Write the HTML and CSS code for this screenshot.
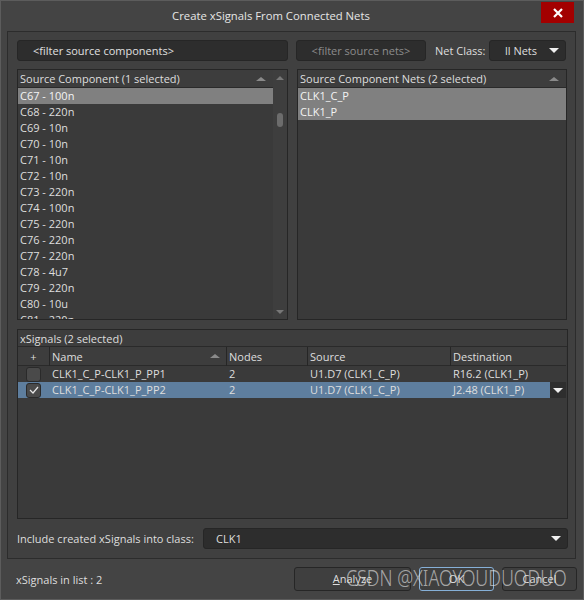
FILE: index.html
```html
<!DOCTYPE html>
<html>
<head>
<meta charset="utf-8">
<link rel="stylesheet" href="styles.css">
</head>
<body>
<div class="window">
  <div class="titlebar">
    <div class="title">Create xSignals From Connected Nets</div>
    <div class="close"><svg width="10" height="10" viewBox="0 0 10 10"><path d="M1 1L9 9M9 1L1 9" stroke="#fff" stroke-width="2.2"/></svg></div>
  </div>
  <div class="panel">
    <div class="filters">
      <div class="input comp">&lt;filter source components&gt;</div>
      <div class="input nets">&lt;filter source nets&gt;</div>
      <div class="label">Net Class:</div>
      <div class="dropdown netclass"><span>ll Nets</span><span class="tri"></span></div>
    </div>
    <div class="lists">
      <div class="list left">
        <div class="list-main">
          <div class="list-head"><span>Source Component (1 selected)</span><span class="up"></span></div>
          <div class="rows">
            <div class="row sel">C67 - 100n</div>
            <div class="row">C68 - 220n</div>
            <div class="row">C69 - 10n</div>
            <div class="row">C70 - 10n</div>
            <div class="row">C71 - 10n</div>
            <div class="row">C72 - 10n</div>
            <div class="row">C73 - 220n</div>
            <div class="row">C74 - 100n</div>
            <div class="row">C75 - 220n</div>
            <div class="row">C76 - 220n</div>
            <div class="row">C77 - 220n</div>
            <div class="row">C78 - 4u7</div>
            <div class="row">C79 - 220n</div>
            <div class="row">C80 - 10u</div>
            <div class="row">C81 - 220n</div>
          </div>
        </div>
        <div class="scrollbar">
          <span class="sb-up"></span>
          <span class="thumb"></span>
          <span class="sb-down"></span>
        </div>
      </div>
      <div class="list right">
        <div class="list-head"><span>Source Component Nets (2 selected)</span><span class="up"></span></div>
        <div class="rows">
          <div class="row sel">CLK1_C_P</div>
          <div class="row sel">CLK1_P</div>
        </div>
      </div>
    </div>
    <div class="xsig">
      <div class="xsig-title">xSignals (2 selected)</div>
      <div class="grid ghead">
        <div class="c c0 plus">+</div>
        <div class="c c1">Name<span class="up sort"></span></div>
        <div class="c c2">Nodes</div>
        <div class="c c3">Source</div>
        <div class="c c4">Destination</div>
      </div>
      <div class="grid grow">
        <div class="c c0"><span class="cb"></span></div>
        <div class="c c1">CLK1_C_P-CLK1_P_PP1</div>
        <div class="c c2">2</div>
        <div class="c c3">U1.D7 (CLK1_C_P)</div>
        <div class="c c4">R16.2 (CLK1_P)</div>
      </div>
      <div class="grid grow gsel">
        <div class="c c0"><span class="cb"><svg width="10" height="8" viewBox="0 0 10 8"><path d="M1 4L4 7L9 1" stroke="#e8e8e8" stroke-width="1.2" fill="none"/></svg></span></div>
        <div class="c c1">CLK1_C_P-CLK1_P_PP2</div>
        <div class="c c2">2</div>
        <div class="c c3">U1.D7 (CLK1_C_P)</div>
        <div class="c c4 dd">J2.48 (CLK1_P)<span class="ddbtn"><span class="tri"></span></span></div>
      </div>
    </div>
    <div class="classrow">
      <div class="label">Include created xSignals into class:</div>
      <div class="dropdown classdd"><span>CLK1</span><span class="tri"></span></div>
    </div>
  </div>
  <div class="bottom">
    <div class="count">xSignals in list : 2</div>
    <div class="buttons">
      <div class="btn analyze"><u>A</u>nalyze</div>
      <div class="btn ok">OK</div>
      <div class="btn cancel">Cancel</div>
    </div>
    <div class="watermark">CSDN @XIAOYOUDUODUO</div>
  </div>
</div>
</body>
</html>
```

FILE: styles.css
```css
* { box-sizing: border-box; }
html, body { margin: 0; padding: 0; background: #444; }
body {
  font-family: "Open Sans", "Noto Sans", sans-serif;
  font-size: 11px;
  color: #dedede;
}
.window {
  width: 584px;
  height: 600px;
  background: #444444;
  border: 1px solid #5c5c5c;
  display: flex;
  flex-direction: column;
  position: relative;
}
.titlebar {
  height: 30px;
  display: flex;
  align-items: flex-start;
  flex-shrink: 0;
}
.title {
  flex: 1;
  text-align: center;
  line-height: 30px;
  font-size: 11.3px;
  color: #e6e6e6;
}
.close {
  width: 33px;
  height: 21px;
  margin-top: 1px;
  margin-right: 9px;
  background: #a30000;
  display: flex;
  align-items: center;
  justify-content: center;
}
.panel {
  margin: 0 7px 0 6px;
  height: 528px;
  border: 1px solid #2c2c2c;
  background: #404040;
  padding: 8px 7px 0 9px;
  display: flex;
  flex-direction: column;
}
.filters {
  display: flex;
  align-items: center;
  height: 21px;
}
.input {
  height: 21px;
  background: #2d2d2d;
  border: 1px solid #262626;
  border-radius: 3px;
  line-height: 19px;
}
.input.comp { width: 271px; padding-left: 15px; color: #e0e0e0; }
.input.nets { width: 130px; margin-left: 8px; text-align: center; color: #8c8c8c; }
.filters .label { margin-left: 9px; width: 54px; }
.dropdown {
  height: 21px;
  background: #2d2d2d;
  border: 1px solid #262626;
  border-radius: 3px;
  display: flex;
  align-items: center;
  justify-content: space-between;
}
.netclass { width: 77px; padding: 0 6px 0 15px; }
.tri {
  width: 0; height: 0;
  border-left: 5px solid transparent;
  border-right: 5px solid transparent;
  border-top: 5px solid #f0f0f0;
}
.lists {
  display: flex;
  margin-top: 8px;
  height: 251px;
  gap: 9px;
}
.list {
  border: 1px solid #262626;
  background: #3a3a3a;
  overflow: hidden;
}
.list.left { width: 271px; display: flex; }
.list.right { width: 270px; }
.list-main { flex: 1; min-width: 0; }
.list-head {
  height: 18px;
  background: #3d3d3d;
  border-bottom: 1px solid #2a2a2a;
  display: flex;
  align-items: center;
  justify-content: space-between;
  padding: 0 7px 0 2px;
}
.up {
  width: 0; height: 0;
  border-left: 5px solid transparent;
  border-right: 5px solid transparent;
  border-bottom: 4px solid #8a8a8a;
}
.row {
  height: 16px;
  line-height: 16px;
  padding-left: 2px;
  white-space: nowrap;
}
.row.sel { background: #808080; color: #f4f4f4; }
.scrollbar {
  width: 14px;
  background: #3e3e3e;
  display: flex;
  flex-direction: column;
  align-items: center;
  position: relative;
}
.sb-up {
  margin-top: 6px;
  width: 0; height: 0;
  border-left: 4px solid transparent;
  border-right: 4px solid transparent;
  border-bottom: 4px solid #777;
}
.thumb {
  margin-top: 33px;
  width: 6px;
  height: 14px;
  border-radius: 3px;
  background: #6c6c6c;
}
.sb-down {
  margin-top: auto;
  margin-bottom: 5px;
  width: 0; height: 0;
  border-left: 4px solid transparent;
  border-right: 4px solid transparent;
  border-top: 4px solid #777;
}
.xsig {
  margin-top: 9px;
  height: 190px;
  border: 1px solid #262626;
  background: #3a3a3a;
}
.xsig-title {
  height: 17px;
  line-height: 17px;
  padding-left: 2px;
  background: #3d3d3d;
  border-bottom: 1px solid #2a2a2a;
}
.grid {
  display: grid;
  grid-template-columns: 31px 177px 81px 143px 116px;
  height: 16px;
  align-items: center;
}
.ghead {
  height: 19px;
  background: #3d3d3d;
  border-bottom: 1px solid #2a2a2a;
  width: 548px;
}
.ghead .c {
  height: 19px;
  line-height: 19px;
  padding-left: 2px;
  border-left: 1px solid #262626;
  position: relative;
}
.ghead .c0 { border-left: none; text-align: center; padding-left: 0; }
.ghead .sort { position: absolute; right: 6px; top: 7px; }
.grow .c {
  height: 16px;
  line-height: 16px;
  padding-left: 3px;
  white-space: nowrap;
}
.grow .c0 { display: flex; justify-content: center; align-items: center; padding-left: 0; }
.grow.gsel { background: #5e7e9e; width: 548px; }
.cb {
  width: 15px;
  height: 15px;
  border-radius: 3px;
  background: #4a4a4a;
  border: 1px solid #2a2a2a;
  display: flex;
  align-items: center;
  justify-content: center;
}
.c.dd { position: relative; }
.ddbtn {
  position: absolute;
  right: 0;
  top: 0;
  width: 16px;
  height: 16px;
  background: #2e2e2e;
  display: flex;
  align-items: center;
  justify-content: center;
}
.classrow {
  margin-top: 9px;
  display: flex;
  align-items: center;
  height: 21px;
}
.classrow .label { width: 186px; }
.classdd { flex: 1; padding: 0 6px 0 12px; }
.bottom {
  flex: 1;
  display: flex;
  align-items: center;
  padding: 0 6px 0 15px;
  position: relative;
}
.count { flex: 1; }
.buttons { display: flex; gap: 8px; }
.btn {
  height: 24px;
  line-height: 22px;
  text-align: center;
  background: #3f3f3f;
  border: 1px solid #262626;
  border-radius: 3px;
}
.analyze { width: 117px; }
.ok { width: 75px; border-color: #86b0d8; }
.cancel { width: 75px; }
.watermark {
  position: absolute;
  left: 345px;
  top: 5px;
  font-family: "Noto Sans", sans-serif;
  font-weight: 300;
  font-size: 21px;
  transform: scaleX(0.85);
  transform-origin: left center;
  color: rgba(235, 235, 235, 0.62);
  white-space: nowrap;
}
```
